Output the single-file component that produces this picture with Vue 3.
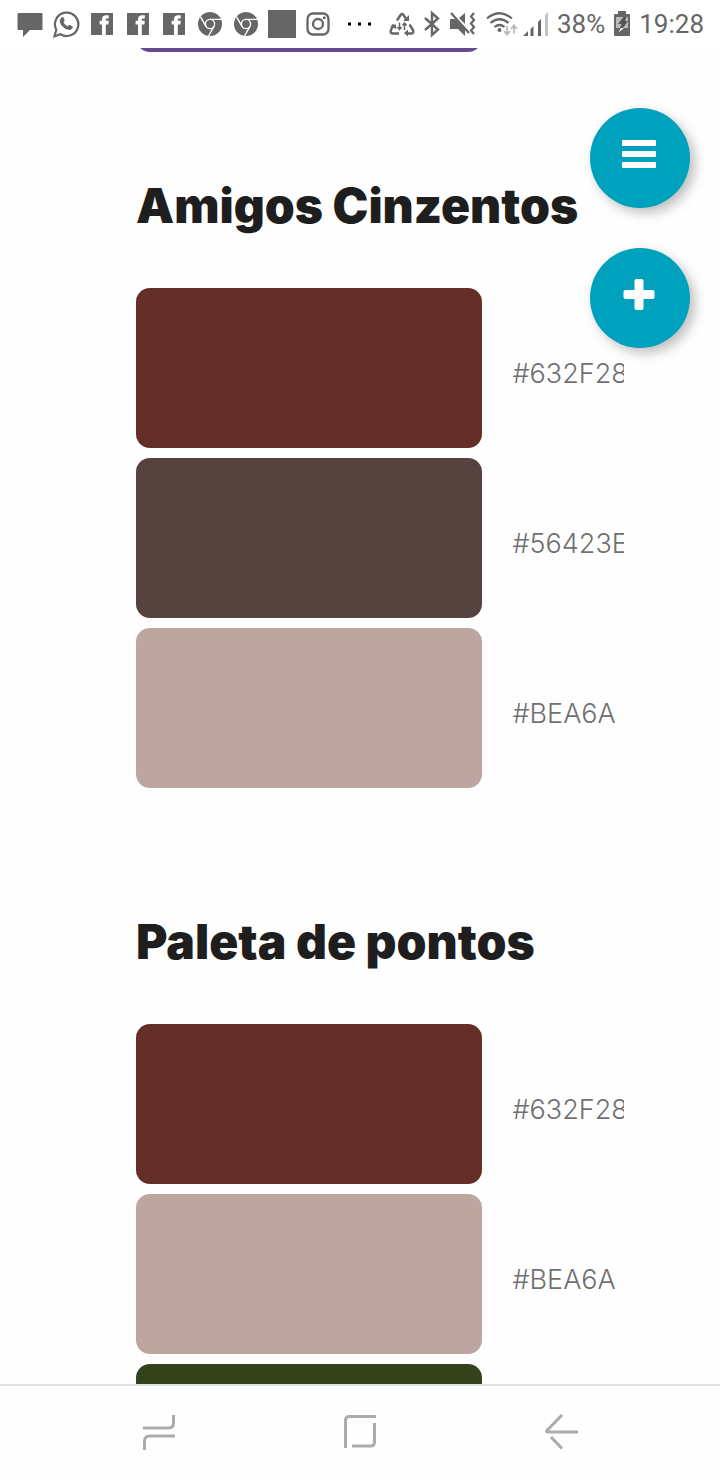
<script setup>
const brown = { fill: '#632F28', code: '#632F28' }
const slate = { fill: '#56423F', code: '#56423E' }
const rose = { fill: '#BEA6A0', code: '#BEA6A' }
const green = { fill: '#33421B', code: '#33421B' }
const palettes = [
  { name: 'Amigos Cinzentos', colors: [brown, slate, rose] },
  { name: 'Paleta de pontos', colors: [brown, rose, green] },
]
const notifications = ['chat', 'whatsapp', 'facebook', 'facebook', 'facebook', 'chrome', 'chrome', 'square', 'instagram']
</script>

<template>
  <div class="screen">
    <header class="status">
      <div class="notes">
        <svg v-for="(n, i) in notifications" :key="i" width="28" height="28" viewBox="0 0 28 28" aria-hidden="true">
          <path v-if="n === 'chat'" fill="#666" d="M2.500 3h23q1 0 1 1v15q0 1-1 1H14l-7 7v-7H2.500q-1 0-1-1V4q0-1 1-1z" />
          <g v-else-if="n === 'whatsapp'">
            <path fill="none" stroke="#666" stroke-width="2.200" d="M2.500 26.200l1.800-6.500a11.700 11.700 0 1 1 4.200 4.500z" />
            <path fill="#666" d="M9.700 7.400c.5-.5 1.500-.5 1.800.2l1.100 2.600c.2.500 0 .9-1.100 2.100.9 1.900 2.300 3.200 4.300 4.100 1.100-1.400 1.400-1.600 2-1.300l2.500 1.200c.6.300.5.800.3 1.500-.6 1.800-2.600 2.500-4.400 2-4.300-1.200-7.300-4.200-8.300-7.600-.5-1.800.5-3.700 1.800-4.800z" />
          </g>
          <g v-else-if="n === 'facebook'">
            <path fill="#666" d="M3 3h22v22H3z" />
            <path fill="#fff" d="M14 25V14.400h-2.400v-3.600H14V9.200c0-2.600 1.600-4 4-4h2.800v3.400h-1.600c-1 0-1.400.4-1.400 1.200v1h3l-.4 3.600h-2.600V25z" />
          </g>
          <g v-else-if="n === 'chrome'">
            <circle cx="14" cy="14" r="12" fill="#666" />
            <circle cx="14" cy="14" r="4.600" fill="none" stroke="#fff" stroke-width="1.400" />
            <path fill="none" stroke="#fff" stroke-width="1.400" d="M14 9.400h11.500M10 16.300L4.400 6.600M18 16.300l-5.500 9.700" />
          </g>
          <path v-else-if="n === 'square'" fill="#666" d="M0 0h28v28H0z" />
          <g v-else>
            <rect x="3.500" y="3.500" width="21" height="21" rx="5.500" fill="none" stroke="#666" stroke-width="2.300" />
            <circle cx="14" cy="14" r="5" fill="none" stroke="#666" stroke-width="2.300" />
            <circle cx="20.200" cy="7.800" r="1.500" fill="#666" />
          </g>
        </svg>
      </div>
      <svg width="24" height="4" viewBox="0 0 24 4" aria-hidden="true">
        <path d="M0 .5h3v3H0zM10 .5h3v3h-3zM20 .5h3v3h-3z" />
      </svg>
      <div class="system">
        <svg width="26" height="28" viewBox="0 0 26 28" fill="none" stroke="#666" stroke-width="2.400" aria-hidden="true">
          <path d="M8 10.500l3.500-5.500q1.500-2 3 0l3 4.500M4.500 14.500l-2.500 5.500q-1.200 3.500 1.500 3.500H10M20.500 14.500l3.500 5.500q1.200 3.500-1.500 3.500H18" />
          <path fill="#666" stroke="none" d="M14 11h6V5zM1 16.500l5.500-2.500 1 5zM19 19.500v7l-4-3.500z" />
          <path stroke-width="1.500" d="M10.500 12.500v7M8.500 17l2 2.500 2-2.500M15.500 20v-7M13.500 15.500l2-2.500 2 2.500" />
        </svg>
        <svg width="16" height="28" viewBox="0 0 16 28" fill="none" stroke="#666" stroke-width="2.400" aria-hidden="true">
          <path d="M1 8l13 11.500-6 5.500V3l6 5.500L1 20" />
        </svg>
        <svg width="28" height="28" viewBox="0 0 28 28" fill="none" stroke="#666" aria-hidden="true">
          <path fill="#666" stroke="none" d="M1 9h5l10 10v7l-7-7H1zM10 8l6-5v11z" />
          <path stroke-width="2.200" d="M2 3l18 20" />
          <path stroke-width="2.200" d="M25 3l-3 3.500 3 3.500-3 3.500 3 3.500-3 3.500 3 3.500" />
        </svg>
        <svg class="wifi" width="32" height="28" viewBox="0 0 32 28" fill="none" stroke="#666" stroke-width="2.200" aria-hidden="true">
          <path d="M1 8.500Q13.500-2 26 8.500M4.500 13q9-7.500 18 0M8.500 17q5-4 10 0" />
          <circle cx="13.500" cy="20" r="2" fill="#666" stroke="none" />
          <path stroke="#bbb" stroke-width="1.800" d="M21 16v8M18 21l3 3.500 3-3.500M28 23.500v-8M25 19l3-3.500 3 3.500" />
        </svg>
        <svg width="25" height="28" viewBox="0 0 25 28" aria-hidden="true">
          <path fill="#666" d="M0 26l5-5v5zM7.500 19l3-3v10h-3zM15 12l3-3v17h-3z" />
          <path fill="#c4c4c4" d="M22 5l3-3v24h-3z" />
        </svg>
        <span>38%</span>
        <svg width="16" height="28" viewBox="0 0 16 28" aria-hidden="true">
          <path fill="#666" d="M4 1h8v3h3q1 0 1 1v20q0 1-1 1H1q-1 0-1-1V5q0-1 1-1h3z" />
          <path fill="#bbb" d="M2 7h12v11H2z" />
          <path fill="#555" d="M9.500 7h3l-1.500 4h3l-5 7H6l1.500-4H4z" />
          <path fill="#fff" d="M7 18h3l-5.500 4.500z" />
        </svg>
        <time>19:28</time>
      </div>
    </header>

    <main class="content">
      <div class="list">
        <div class="swatch previous"></div>
        <section v-for="p in palettes" :key="p.name">
          <h2>{{ p.name }}</h2>
          <ul>
            <li v-for="c in p.colors" :key="c.fill">
              <div class="swatch" :style="{ background: c.fill }"></div>
              <span class="code">{{ c.code }}</span>
            </li>
          </ul>
        </section>
      </div>
      <div class="actions">
        <button aria-label="Menu">
          <svg width="34" height="34" viewBox="0 0 34 34" fill="#fff">
            <rect y="3" width="34" height="6" rx="1" />
            <rect y="14" width="34" height="6" rx="1" />
            <rect y="25" width="34" height="6" rx="1" />
          </svg>
        </button>
        <button aria-label="Adicionar">
          <svg width="34" height="34" viewBox="0 0 34 34" fill="#fff">
            <rect x="1.500" y="13" width="31" height="9" rx="2" />
            <rect x="12.500" y="2" width="9" height="31" rx="2" />
          </svg>
        </button>
      </div>
    </main>

    <nav class="navbar">
      <button aria-label="Recentes">
        <svg width="36" height="38" viewBox="0 0 36 38">
          <path d="M2 14h25.500q5 0 5-5V1M34 22H8.500q-5 0-5 5v9" />
        </svg>
      </button>
      <button aria-label="Início">
        <svg width="36" height="38" viewBox="0 0 36 38">
          <path d="M3.500 34V6.500q0-4 4-4H34M32.500 9v19q0 4-4 4H10" />
        </svg>
      </button>
      <button aria-label="Voltar">
        <svg width="36" height="38" viewBox="0 0 36 38">
          <path d="M19 1L4 16.500q-1 1.500 1 1.500h30M8 23l11 11.500" />
        </svg>
      </button>
    </nav>
  </div>
</template>

<style>
body {
  background: #fefefe;
}
</style>

<style scoped>
.screen {
  display: flex;
  flex-direction: column;
  height: 100vh;
  overflow: hidden;
  color: #1e1e1e;
  font-family: Inter, "Open Sans", sans-serif;
}
svg {
  display: block;
  flex: none;
}
.status {
  display: flex;
  align-items: center;
  justify-content: space-between;
  height: 48px;
  flex: none;
  padding: 0 16px;
  background: #fff;
  box-sizing: border-box;
}
.notes {
  display: flex;
  align-items: center;
  gap: 8px;
}
.system {
  display: flex;
  align-items: center;
  gap: 9px;
  color: #666;
  font: 26px/48px Roboto, sans-serif;
}
.wifi {
  margin-right: -4px;
}
.content {
  position: relative;
  flex: 1;
  min-height: 0;
  overflow: hidden;
}
.list {
  padding: 0 96px 0 136px;
}
.swatch {
  flex: none;
  width: 71%;
  height: 160px;
  border-radius: 14px;
}
.previous {
  margin-top: -156px;
  background: #644a8e;
}
h2 {
  margin: 0;
  padding: 124px 0 52px;
  font-size: 48px;
  line-height: 60px;
  font-weight: 900;
  white-space: nowrap;
}
ul {
  display: flex;
  flex-direction: column;
  gap: 10px;
  margin: 0;
  padding: 0;
  list-style: none;
}
li {
  display: flex;
  align-items: center;
  overflow: hidden;
}
.code {
  padding: 12px 0 0 30px;
  color: #707070;
  font-size: 27px;
  line-height: 32px;
  font-weight: 300;
}
button {
  display: flex;
  align-items: center;
  justify-content: center;
  padding: 0;
  border: 0;
  background: none;
  cursor: pointer;
}
.actions {
  position: absolute;
  top: 60px;
  right: 30px;
  display: flex;
  flex-direction: column;
  gap: 40px;
}
.actions button {
  width: 100px;
  height: 100px;
  padding: 0 2px 8px 0;
  border-radius: 50%;
  background: #00a1bc;
  box-shadow: 5px 5px 12px rgba(0, 0, 0, 0.25);
}
.navbar {
  display: flex;
  align-items: center;
  justify-content: space-between;
  flex: none;
  height: 96px;
  padding: 0 138px;
  border-top: 2px solid #e0e0e0;
  background: #fefefe;
  box-sizing: border-box;
}
.navbar button {
  width: 42px;
  height: 38px;
}
.navbar svg {
  fill: none;
  stroke: #ababab;
  stroke-width: 3;
}
</style>
